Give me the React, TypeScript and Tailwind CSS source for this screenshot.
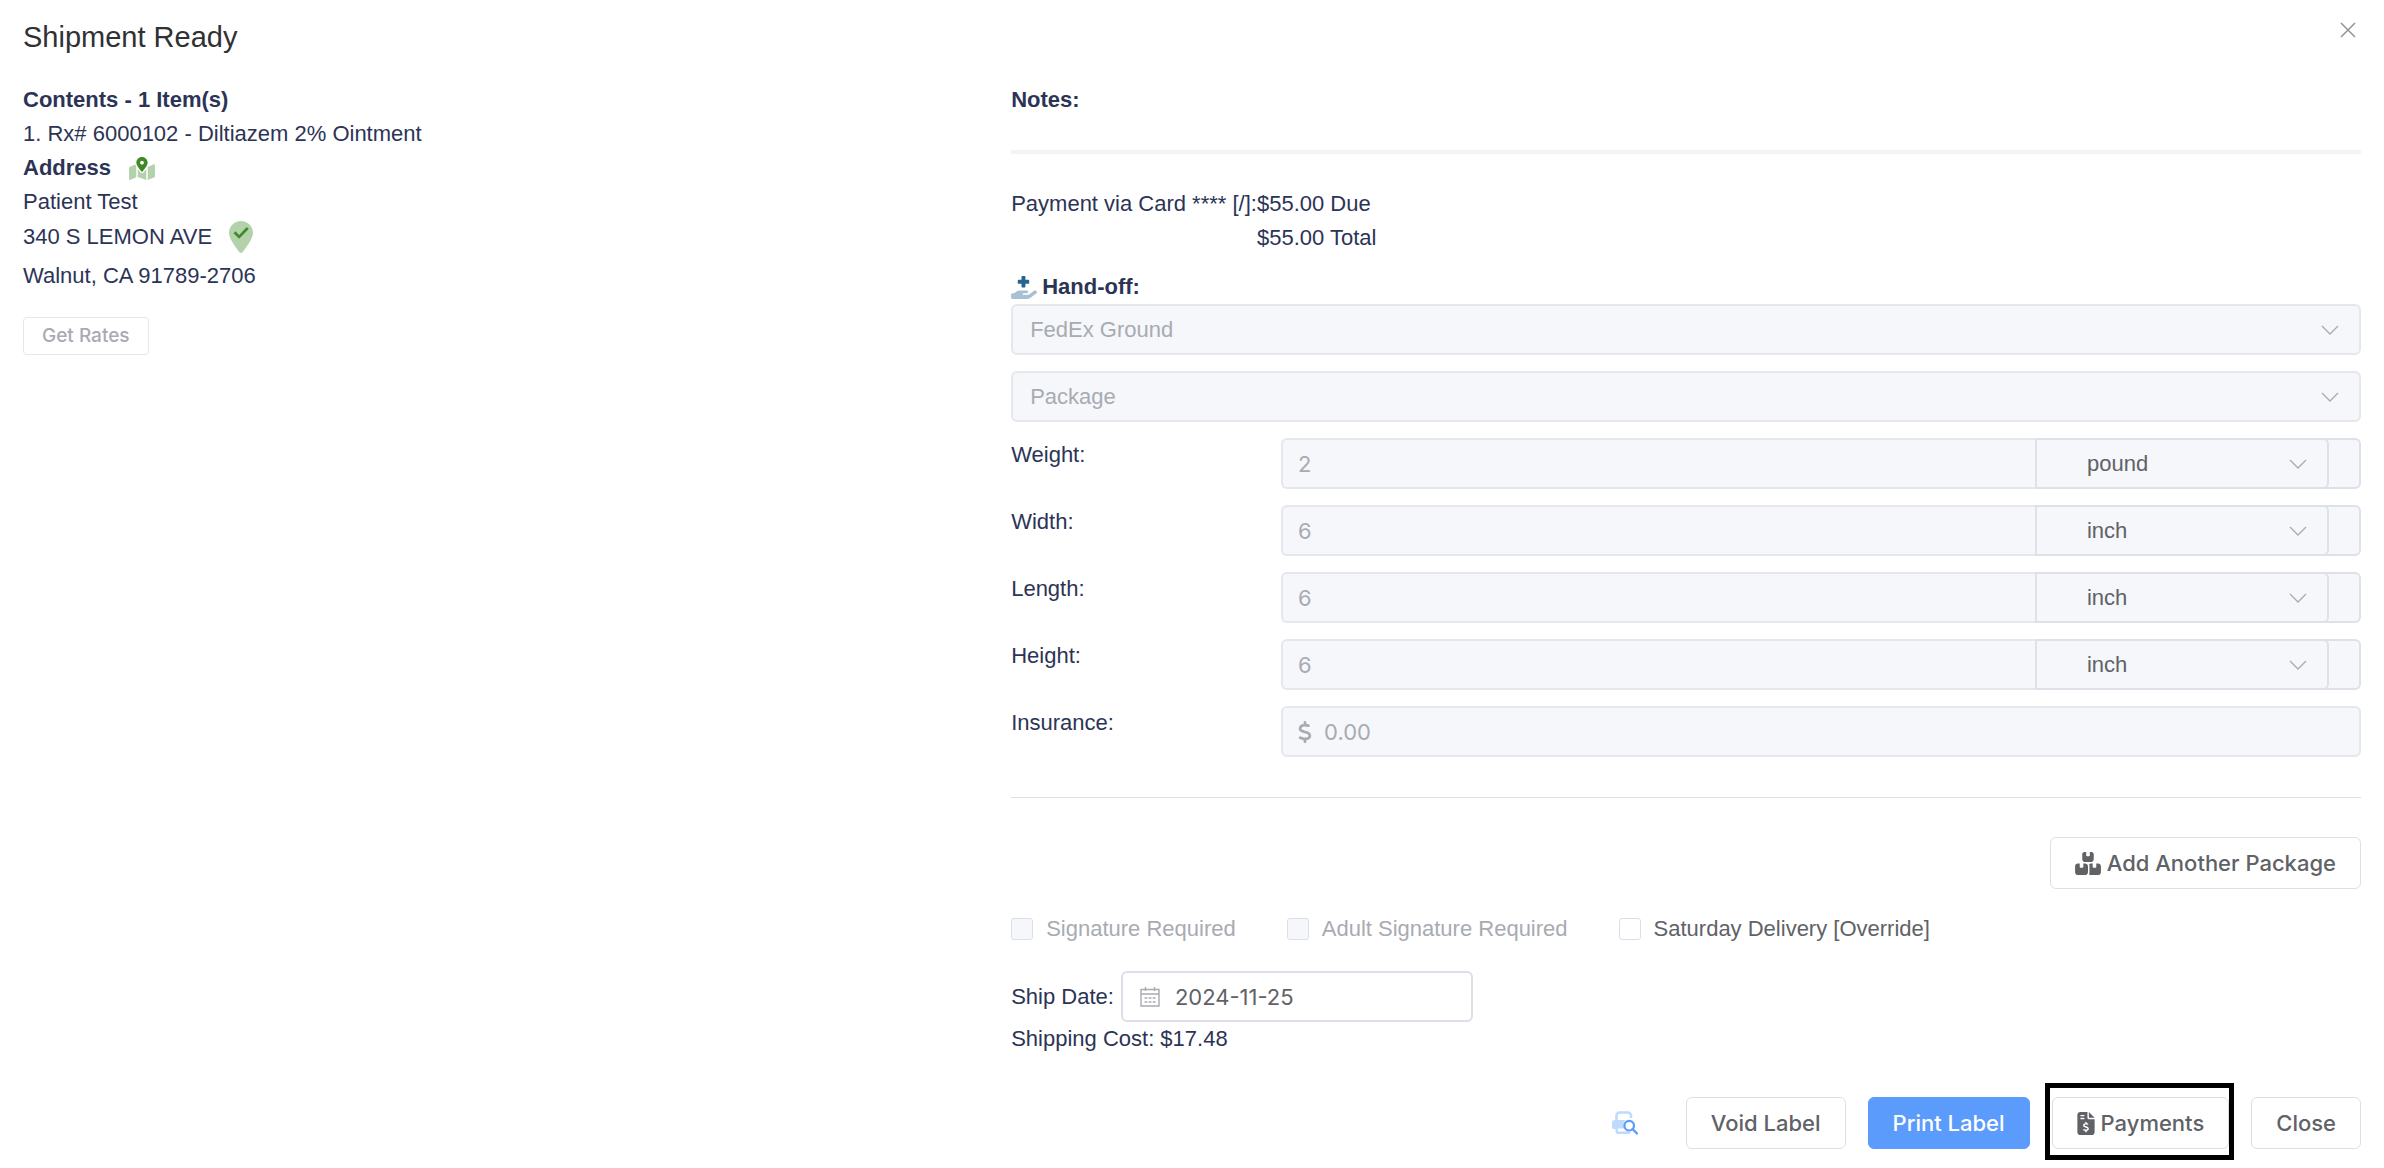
import type { ReactNode } from "react";
import { FaBoxesStacked, FaDollarSign, FaFileInvoiceDollar } from "react-icons/fa6";

function MapMarkedIcon() {
  return (
    <svg viewBox="0 0 576 512" className="h-[23px] w-[26px]" aria-hidden="true">
      <path
        fill="#b3d1ab"
        d="M20.12 215.95A32.006 32.006 0 0 0 0 245.66v250.32c0 11.32 11.43 19.06 21.94 14.86L160 448V214.92c-8.84-15.98-16.07-31.54-21.25-46.42L20.12 215.95zM288 359.67c-14.07 0-27.38-6.18-36.51-16.96-19.66-23.2-40.57-49.62-59.49-76.72v182l192 64V266c-18.92 27.09-39.82 53.52-59.49 76.72-9.13 10.77-22.44 16.95-36.51 16.95zm266.06-198.51L416 224v288l139.88-55.95A31.996 31.996 0 0 0 576 426.34V176.02c0-11.32-11.43-19.06-21.94-14.86z"
      />
      <path
        fill="#3f8a26"
        d="M288 0c-69.59 0-126 56.41-126 126 0 56.26 82.35 158.8 113.9 196.02 6.39 7.54 17.82 7.54 24.2 0C331.65 284.8 414 182.26 414 126 414 56.41 357.59 0 288 0zm0 168c-23.2 0-42-18.8-42-42s18.8-42 42-42 42 18.8 42 42-18.8 42-42 42z"
      />
    </svg>
  );
}

function VerifiedPinIcon() {
  return (
    <svg viewBox="0 0 384 512" className="h-8 w-6" aria-hidden="true">
      <path
        fill="#b3d1ab"
        d="M215.7 499.2C267 435 384 279.4 384 192 384 86 298 0 192 0S0 86 0 192c0 87.400 117 243 168.300 307.200 12.300 15.300 35.100 15.300 47.400 0z"
      />
      <path d="M88 180l74 74L300 112" fill="none" stroke="#3f8a26" strokeWidth="42" />
    </svg>
  );
}

function HandOffIcon() {
  return (
    <svg viewBox="0 0 576 512" className="h-[23px] w-[26px]" aria-hidden="true">
      <path
        fill="#a9c0d2"
        d="M559.7 392.2c17.8-13.1 21.6-38.1 8.500-55.900s-38.100-21.600-55.900-8.500L392.600 416H272c-8.800 0-16-7.200-16-16s7.200-16 16-16h80c17.700 0 32-14.300 32-32s-14.300-32-32-32H193.700c-29.100 0-57.300 9.900-80 28L68.800 384H32c-17.700 0-32 14.300-32 32v64c0 17.700 14.300 32 32 32h320.500c29 0 57.300-9.300 80.700-26.500l126.500-93.300z"
      />
      <path
        fill="#27648f"
        d="M232 24v60h-60c-13.300 0-24 10.700-24 24v40c0 13.300 10.700 24 24 24h60v60c0 13.300 10.700 24 24 24h40c13.300 0 24-10.700 24-24v-60h60c13.300 0 24-10.700 24-24v-40c0-13.300-10.700-24-24-24h-60V24c0-13.300-10.700-24-24-24h-40c-13.300 0-24 10.700-24 24z"
      />
    </svg>
  );
}

function PrintPreviewIcon() {
  return (
    <svg viewBox="0 0 26 24" className="h-6 w-[26px]" fill="none" aria-hidden="true">
      <path d="M4.500 9V4.500a3 3 0 0 1 3-3h8.500a3 3 0 0 1 3 3V7" stroke="#bedafe" strokeWidth="2.600" />
      <path
        d="M3 9h10.500a7 7 0 0 0 1 10.500 7 7 0 0 0 4.500 1.300v.2a2.500 2.500 0 0 1-2.500 2H6a2.500 2.500 0 0 1-2.500-2.500V18H1.500A1.500 1.500 0 0 1 0 16.500V12a3 3 0 0 1 3-3z"
        fill="#bedafe"
      />
      <path d="M6 17.500h7l1.500 3H6z" fill="#fff" />
      <circle cx="17.200" cy="14.700" r="4.800" stroke="#5b9bfc" strokeWidth="2.200" fill="#fff" />
      <path d="M20.500 18l4.500 4.500" stroke="#5b9bfc" strokeWidth="2.400" strokeLinecap="round" />
    </svg>
  );
}

function CalendarIcon() {
  return (
    <svg viewBox="0 0 20 20" className="h-5 w-5" fill="none" stroke="#a8abb2" aria-hidden="true">
      <path d="M1 2.500h18v16.500H1zM1 7h18" strokeWidth="1.400" />
      <path d="M5.500 0v4M14.500 0v4" strokeWidth="1.400" />
      <path d="M4.500 11h11M4.500 15h11" strokeWidth="1.400" strokeDasharray="2.800 1.300" />
    </svg>
  );
}

function Chevron() {
  return (
    <svg viewBox="0 0 18 10" className="h-[10px] w-[18px]" fill="none" stroke="#a8abb2" strokeWidth="1.300" aria-hidden="true">
      <path d="M1 1l8 8 8-8" />
    </svg>
  );
}

function WideSelect({ label, value }: { label: string; value: string }) {
  return (
    <div className="relative mb-4">
      <select
        aria-label={label}
        disabled
        className="block h-[51px] w-full appearance-none rounded-md border-2 border-[#e6e7ed] bg-[#f5f7fb] px-[17px] text-[#a8abb2] opacity-100"
      >
        <option>{value}</option>
      </select>
      <span className="pointer-events-none absolute inset-y-0 right-[22px] flex items-center">
        <Chevron />
      </span>
    </div>
  );
}

function Measure({ id, label, value, unit }: { id: string; label: string; value: string; unit: string }) {
  return (
    <div className="mb-4 grid grid-cols-[1fr_4fr]">
      <label htmlFor={id}>{label}:</label>
      <div className="flex h-[51px]">
        <input
          id={id}
          disabled
          defaultValue={value}
          className="min-w-0 flex-1 rounded-l-md border-2 border-r-0 border-[#e6e7ed] bg-[#f5f7fb] px-[15px] font-[Inter,sans-serif] text-[22px] text-[#a8abb2]"
        />
        <div className="flex w-[326px] rounded-r-md border-2 border-[#dfe1e8] bg-[#f5f7fb]">
          <div className="relative -my-0.5 flex-1">
            <select
              aria-label={`${label} unit`}
              className="h-full w-full appearance-none rounded-r-md border-2 border-l-0 border-[#dfe1e8] bg-transparent pl-[50px] text-[#606266]"
            >
              <option>{unit}</option>
            </select>
            <span className="pointer-events-none absolute inset-y-0 right-[22px] flex items-center">
              <Chevron />
            </span>
          </div>
          <div className="w-[30px]" />
        </div>
      </div>
    </div>
  );
}

function Check({ label, disabled }: { label: string; disabled?: boolean }) {
  return (
    <label className={`flex items-center gap-[13px] ${disabled ? "text-[#a8abb2]" : "text-[#606266]"}`}>
      <input
        type="checkbox"
        disabled={disabled}
        className="h-[22px] w-[22px] appearance-none rounded-[3px] border border-[#dcdfe9] bg-white disabled:bg-[#f5f7fb]"
      />
      {label}
    </label>
  );
}

function Button({ children, primary }: { children: ReactNode; primary?: boolean }) {
  return (
    <button
      type="button"
      className={`flex h-[52px] items-center gap-[6px] rounded-md border px-6 font-[Inter,sans-serif] text-[22px] font-medium ${
        primary ? "border-[#5b9bfc] bg-[#5b9bfc] text-white" : "border-[#dcdfe9] bg-white text-[#606266]"
      }`}
    >
      {children}
    </button>
  );
}

export default function App() {
  return (
    <main className="bg-white px-[23px] pb-[18px] font-['Liberation_Sans',Arial,sans-serif] text-[22px] leading-[34px] text-[#2c3456]">
      <header className="flex h-[83px] items-start justify-between pt-[19px]">
        <h1 className="text-[29px] leading-9 text-[#303133]">Shipment Ready</h1>
        <button type="button" aria-label="Close dialog" className="mr-[5px] mt-[3px]">
          <svg viewBox="0 0 16 16" className="h-4 w-4" stroke="#909399" strokeWidth="1.500" aria-hidden="true">
            <path d="M1 1l14 14M15 1L1 15" />
          </svg>
        </button>
      </header>

      <div className="grid grid-cols-[5fr_7fr]">
        <section>
          <h2 className="font-bold">Contents - 1 Item(s)</h2>
          <ol>
            <li>1. Rx# 6000102 - Diltiazem 2% Ointment</li>
          </ol>
          <h2 className="flex items-center gap-[18px] font-bold">
            Address <MapMarkedIcon />
          </h2>
          <address className="not-italic">
            <p>Patient Test</p>
            <p className="mb-1 flex h-9 items-center gap-[17px]">
              340 S LEMON AVE <VerifiedPinIcon />
            </p>
            <p>Walnut, CA 91789-2706</p>
          </address>
          <button
            type="button"
            disabled
            className="mt-6 flex h-[38px] items-center rounded-[4px] border border-[#e4e7ed] px-[18px] font-[Inter,sans-serif] text-[19px] font-medium text-[#a8abb2]"
          >
            Get Rates
          </button>
        </section>

        <section className="pl-[14px]">
          <h2 className="font-bold">Notes:</h2>
          <hr className="mt-[33px] border-t-4 border-[#f4f4f5]" />

          <div className="mt-[33px] flex">
            <p>Payment via Card **** [/]:</p>
            <div>
              <p>$55.00 Due</p>
              <p>$55.00 Total</p>
            </div>
          </div>

          <h2 className="mt-[15px] flex items-center gap-[5px] font-bold">
            <HandOffIcon /> Hand-off:
          </h2>
          <WideSelect label="Shipping service" value="FedEx Ground" />
          <WideSelect label="Package type" value="Package" />
          <Measure id="weight" label="Weight" value="2" unit="pound" />
          <Measure id="width" label="Width" value="6" unit="inch" />
          <Measure id="length" label="Length" value="6" unit="inch" />
          <Measure id="height" label="Height" value="6" unit="inch" />
          <div className="grid grid-cols-[1fr_4fr]">
            <label htmlFor="insurance">Insurance:</label>
            <div className="flex h-[51px] items-center rounded-md border-2 border-[#e6e7ed] bg-[#f5f7fb] pl-[15px] text-[#a8abb2]">
              <FaDollarSign className="h-[22px] w-[14px]" aria-hidden="true" />
              <input
                id="insurance"
                disabled
                placeholder="0.00"
                className="ml-3 min-w-0 flex-1 bg-transparent font-[Inter,sans-serif] text-[22px] placeholder:text-[#a8abb2]"
              />
            </div>
          </div>

          <hr className="mt-10 border-[#dcdfe6]" />

          <div className="mt-[39px] flex justify-end">
            <Button>
              <FaBoxesStacked className="h-[23px] w-[26px]" aria-hidden="true" />
              Add Another Package
            </Button>
          </div>

          <div className="mt-[23px] flex gap-[51px]">
            <Check label="Signature Required" disabled />
            <Check label="Adult Signature Required" disabled />
            <Check label="Saturday Delivery [Override]" />
          </div>

          <div className="mt-[25px] flex items-center gap-[7px]">
            <label htmlFor="ship-date">Ship Date:</label>
            <div className="flex h-[51px] w-[352px] items-center gap-[15px] rounded-md border-2 border-[#dcdfe9] pl-[17px]">
              <CalendarIcon />
              <input
                id="ship-date"
                defaultValue="2024-11-25"
                className="min-w-0 flex-1 font-[Inter,sans-serif] text-[22px] text-[#606266] outline-none"
              />
            </div>
          </div>
          <p>Shipping Cost: $17.48</p>
        </section>
      </div>

      <footer className="mt-[41px] flex items-center justify-end gap-[22px]">
        <button type="button" aria-label="Preview label" className="mr-[26px]">
          <PrintPreviewIcon />
        </button>
        <Button>Void Label</Button>
        <Button primary>Print Label</Button>
        <div className="relative">
          <Button>
            <FaFileInvoiceDollar className="h-[23px] w-[18px]" aria-hidden="true" />
            Payments
          </Button>
          <span className="pointer-events-none absolute -bottom-[11px] -left-[7px] -right-[5px] -top-[14px] border-[5px] border-black" />
        </div>
        <Button>Close</Button>
      </footer>
    </main>
  );
}
